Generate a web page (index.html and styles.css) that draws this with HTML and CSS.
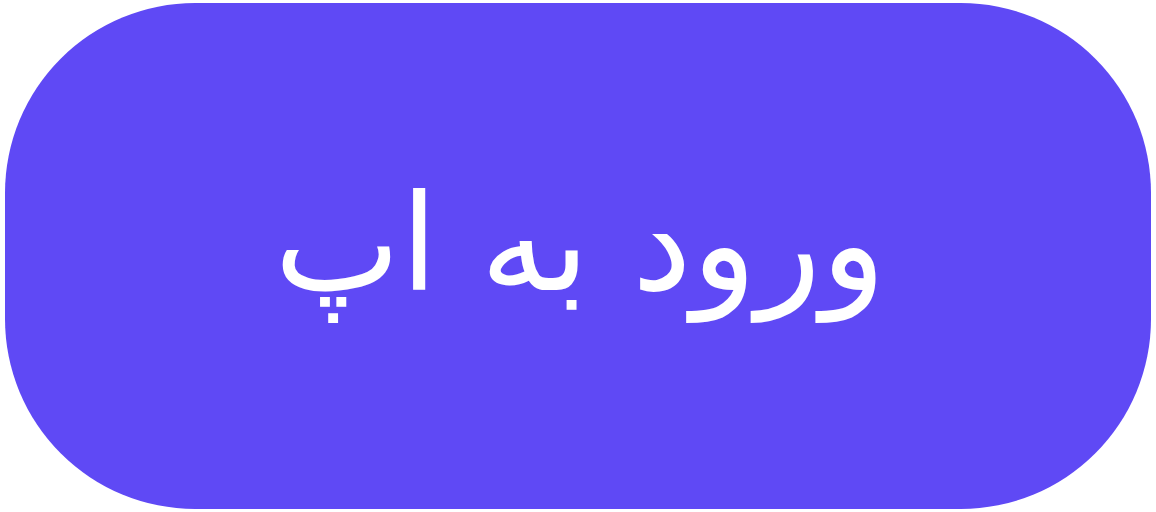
FILE: index.html
```html
<!DOCTYPE html>
<html lang="fa" dir="rtl">
<head>
<meta charset="utf-8">
<link rel="stylesheet" href="styles.css">
</head>
<body>
<div class="page">
  <button class="btn" type="button">ورود به اپ</button>
</div>
</body>
</html>
```
FILE: styles.css
```css
html, body {
  margin: 0;
  padding: 0;
  background: #ffffff;
}
.page {
  width: 1156px;
  height: 512px;
  padding: 3px 5px 3px 5px;
  box-sizing: border-box;
  display: flex;
}
.btn {
  flex: 1;
  border: none;
  margin: 0;
  padding: 0 0 24px 4px;
  background: #5f49f5;
  border-radius: 190px;
  color: #ffffff;
  font-family: "DejaVu Sans", sans-serif;
  font-size: 134px;
  line-height: 1;
  display: flex;
  align-items: center;
  justify-content: center;
}
```
